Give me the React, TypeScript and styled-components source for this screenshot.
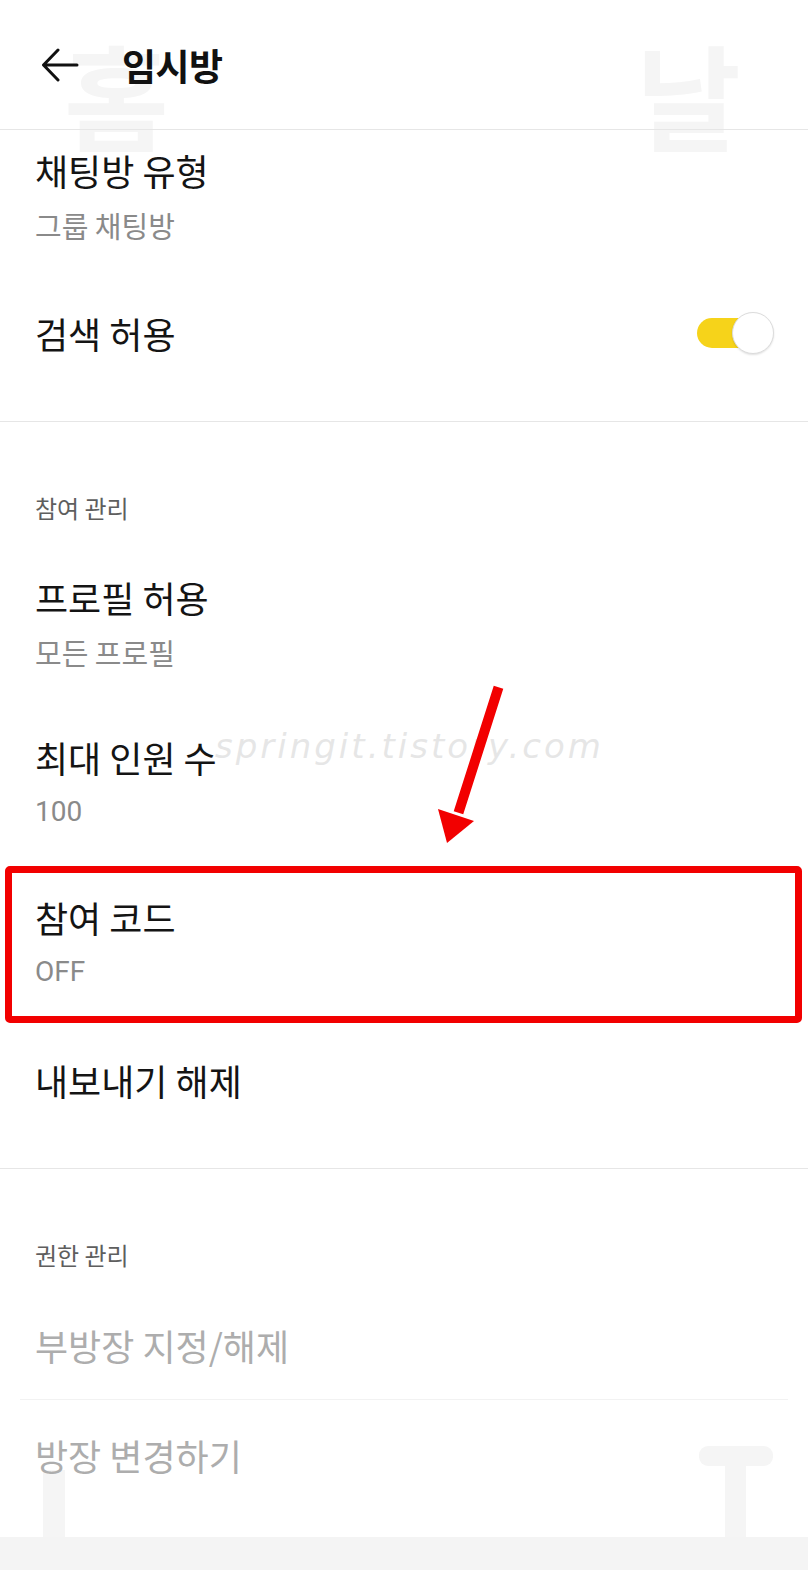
import React from "react";
import styled, { createGlobalStyle } from "styled-components";

const GlobalStyle = createGlobalStyle`
  html, body { margin: 0; padding: 0; background: #ffffff; }
  body { font-family: "Noto Sans CJK KR", "Noto Sans", sans-serif; -webkit-font-smoothing: antialiased; }
  * { box-sizing: border-box; }
`;

const Page = styled.div`
  position: relative;
  width: 808px;
  min-height: 1570px;
  display: flex;
  flex-direction: column;
  background: #ffffff;
  overflow: hidden;
`;

const Content = styled.div`
  position: relative;
  z-index: 1;
  display: flex;
  flex-direction: column;
  flex: 1;
`;

const GhostGlyph = styled.div<{ $left: number }>`
  position: absolute;
  top: 36px;
  left: ${(p) => p.$left}px;
  z-index: 0;
  font-family: "Noto Sans CJK KR", sans-serif;
  font-weight: 700;
  font-size: 114px;
  line-height: 1;
  color: #f5f5f5;
`;

const GhostShapes = styled.svg`
  position: absolute;
  left: 0;
  top: 1440px;
  z-index: 0;
`;

const Header = styled.header`
  height: 130px;
  display: flex;
  align-items: center;
  gap: 42px;
  padding: 0 0 0 40px;
  border-bottom: 1px solid #e6e6e6;
`;

const BackButton = styled.button`
  width: 40px;
  height: 40px;
  padding: 0;
  border: none;
  background: transparent;
  display: flex;
  align-items: center;
  justify-content: center;
`;

const HeaderTitle = styled.h1`
  margin: 0;
  font-size: 37px;
  font-weight: 700;
  color: #111;
  line-height: 44px;
  letter-spacing: -0.5px;
`;

const Section = styled.section<{ $bottom?: number }>`
  display: flex;
  flex-direction: column;
  padding-bottom: ${(p) => p.$bottom ?? 0}px;
`;

const Divider = styled.hr`
  margin: 0;
  border: none;
  height: 1px;
  background: #e6e6e6;
`;

const SectionLabel = styled.div`
  padding: 71px 35px 20px;
  font-size: 24px;
  line-height: 30px;
  color: #5e5e5e;
`;

const Item = styled.div<{ $top?: number }>`
  position: relative;
  display: flex;
  flex-direction: column;
  padding: ${(p) => p.$top ?? 32}px 35px 33px;
  height: ${(p) => (p.$top ?? 32) + 128}px;
`;

const SingleItem = styled.div<{ $height?: number; $rule?: boolean }>`
  position: relative;
  display: flex;
  align-items: center;
  justify-content: space-between;
  height: ${(p) => p.$height ?? 114}px;
  padding: 0 35px;
  &::after {
    content: "";
    display: ${(p) => (p.$rule ? "block" : "none")};
    position: absolute;
    left: 20px;
    right: 20px;
    bottom: 0;
    height: 1px;
    background: #f2f2f2;
  }
`;

const Title = styled.div<{ $disabled?: boolean }>`
  font-size: 36px;
  line-height: 44px;
  color: ${(p) => (p.$disabled ? "#adadad" : "#141414")};
  white-space: nowrap;
`;

const Sub = styled.div`
  margin-top: 15px;
  font-size: 29px;
  line-height: 36px;
  color: #8a8a8a;
  white-space: nowrap;
`;

const SubLatin = styled(Sub)`
  font-family: Roboto, "Noto Sans", sans-serif;
  font-size: 28px;
`;

const Toggle = styled.div`
  position: relative;
  width: 77px;
  height: 44px;
  margin-right: -1px;
`;

const Track = styled.div`
  position: absolute;
  left: 0;
  top: 7px;
  width: 56px;
  height: 30px;
  border-radius: 15px;
  background: #f6d31a;
`;

const Knob = styled.div`
  position: absolute;
  right: 0;
  top: 1px;
  width: 42px;
  height: 42px;
  border-radius: 50%;
  background: #ffffff;
  border: 1px solid #dcdcdc;
  box-shadow: 0 1px 2px rgba(0, 0, 0, 0.12);
`;

const Highlight = styled.div`
  position: absolute;
  top: 3px;
  left: 5px;
  right: 6px;
  bottom: 0;
  border: 7px solid #f20000;
  border-radius: 5px;
  pointer-events: none;
`;

const Annotation = styled.svg`
  position: absolute;
  left: 430px;
  top: 680px;
  z-index: 2;
`;

const Watermark = styled.div`
  position: absolute;
  left: 215px;
  top: 726px;
  z-index: 2;
  font-family: "DejaVu Sans", sans-serif;
  font-style: italic;
  font-weight: 300;
  font-size: 34px;
  letter-spacing: 3px;
  color: rgba(205, 205, 205, 0.5);
  white-space: nowrap;
`;

const BottomBar = styled.div`
  height: 33px;
  margin-top: auto;
  background: #f4f4f4;
  position: relative;
  z-index: 1;
`;

const Spacer = styled.div`
  flex: 1;
`;

const BackArrow = () => (
  <svg width="38" height="34" viewBox="0 0 38 34" fill="none">
    <path d="M36 17H3M17 2L2.5 17 17 32" stroke="#111" strokeWidth="3" strokeLinecap="round" strokeLinejoin="round" />
  </svg>
);

export default function App() {
  return (
    <Page>
      <GlobalStyle />
      <GhostGlyph $left={64}>홈</GhostGlyph>
      <GhostGlyph $left={636}>날</GhostGlyph>
      <GhostShapes width="808" height="100" viewBox="0 0 808 100">
        <rect x="43" y="30" width="22" height="70" fill="#f5f5f5" />
        <rect x="699" y="6" width="74" height="20" rx="9" fill="#f5f5f5" />
        <rect x="725" y="20" width="21" height="80" fill="#f5f5f5" />
      </GhostShapes>
      <Content>
        <Header>
          <BackButton aria-label="back">
            <BackArrow />
          </BackButton>
          <HeaderTitle>임시방</HeaderTitle>
        </Header>

        <Section $bottom={31}>
          <Item $top={18}>
            <Title>채팅방 유형</Title>
            <Sub>그룹 채팅방</Sub>
          </Item>
          <SingleItem>
            <Title>검색 허용</Title>
            <Toggle>
              <Track />
              <Knob />
            </Toggle>
          </SingleItem>
        </Section>
        <Divider />

        <Section $bottom={31}>
          <SectionLabel>참여 관리</SectionLabel>
          <Item>
            <Title>프로필 허용</Title>
            <Sub>모든 프로필</Sub>
          </Item>
          <Item>
            <Title>최대 인원 수</Title>
            <SubLatin>100</SubLatin>
          </Item>
          <Item>
            <Title>참여 코드</Title>
            <SubLatin>OFF</SubLatin>
            <Highlight />
          </Item>
          <SingleItem>
            <Title>내보내기 해제</Title>
          </SingleItem>
        </Section>
        <Divider />

        <Section>
          <SectionLabel>권한 관리</SectionLabel>
          <SingleItem $height={110} $rule>
            <Title $disabled>부방장 지정/해제</Title>
          </SingleItem>
          <SingleItem $height={110}>
            <Title $disabled>방장 변경하기</Title>
          </SingleItem>
        </Section>
        <Spacer />
        <BottomBar />
      </Content>

      <Watermark>springit.tistory.com</Watermark>
      <Annotation width="80" height="170" viewBox="0 0 80 170">
        <line x1="67" y1="12" x2="30" y2="128" stroke="#f20000" strokeWidth="10" strokeLinecap="square" />
        <polygon points="8,129 44,141 17,163" fill="#f20000" />
      </Annotation>
    </Page>
  );
}
